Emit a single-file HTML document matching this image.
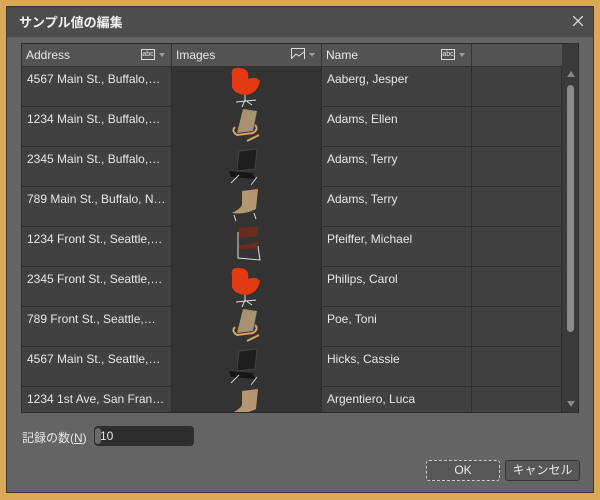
<!DOCTYPE html>
<html><head><meta charset="utf-8"><style>
*{margin:0;padding:0;box-sizing:border-box}
body{width:600px;height:500px;background:#d9a955;position:relative;overflow:hidden;font-family:"Liberation Sans","Noto Sans CJK JP",sans-serif;font-size:12px;color:#e8e8e8}
#win{position:absolute;left:6px;top:6px;width:588px;height:487px;background:#646464;border:1px solid #3a3a3a}
#title{position:absolute;left:0;top:0;width:586px;height:30px;background:#4d4d4d;font-size:13px;font-weight:bold;color:#f0f0f0;padding:5px 0 0 12px}
#close{position:absolute;right:10px;top:9px}
#grid{position:absolute;left:14px;top:36px;width:558px;height:370px;background:#414141;border:1px solid #2c2c2c;overflow:hidden}
.hd{position:absolute;top:0;height:23px;background:#535353;border-right:1px solid #333;border-bottom:1px solid #333;padding:4px 4px;font-size:12px}
.ic{position:absolute;right:16px;top:5px;width:14px;height:11px;border:1px solid #ddd;font-size:7px;line-height:9px;text-align:center}
.ar{position:absolute;right:6px;top:9px;width:0;height:0;border-left:3px solid transparent;border-right:3px solid transparent;border-top:4px solid #999}
.row{position:absolute;left:0;width:540px;height:40px;border-bottom:1px solid #2e2e2e}
.c{position:absolute;top:0;height:40px;border-right:1px solid #2e2e2e;padding:5px 5px;white-space:nowrap;overflow:hidden}
#imgcol{position:absolute;left:150px;top:23px;width:150px;height:350px;background:#333;border-right:1px solid #2e2e2e}
#sb{position:absolute;left:540px;top:0;width:17px;height:370px;background:#3a3a3a}
#thumb{position:absolute;left:5px;top:41px;width:7px;height:247px;background:#8a8a8a;border-radius:4px}
.btn{position:absolute;top:459px;height:21px;background:#575757;border:1px solid #333;border-radius:3px;text-align:center;line-height:18px;font-size:12px}
</style></head><body>
<div id="win">
<div id="title">サンプル値の編集<svg id="close" width="10" height="10"><path d="M0 0L10 10M10 0L0 10" stroke="#ddd" stroke-width="1.3"/></svg></div>
<div id="grid">
 <div class="hd" style="left:0;width:150px">Address<div class="ic">abc</div><div class="ar"></div></div>
 <div class="hd" style="left:150px;width:150px">Images<svg class="ic" style="border:none;top:4px" width="14" height="12"><rect x="0.5" y="0.5" width="13" height="11" fill="none" stroke="#ddd"/><path d="M1 10L5 6L8 8L13 4" fill="none" stroke="#ddd"/></svg><div class="ar"></div></div>
 <div class="hd" style="left:300px;width:150px">Name<div class="ic">abc</div><div class="ar"></div></div>
 <div class="hd" style="left:450px;width:90px;border-right:none"></div>
 <div id="rows"></div>
 <div id="imgcol">
  <svg width="150" height="350" viewBox="0 0 150 350">
   <defs>
    <g id="red"><path d="M4 8 Q2 0 12 1 Q22 2 20 12 Q28 9 32 14 Q30 26 18 28 Q6 27 4 20 Z" fill="#e23a12"/><path d="M17 28 L17 33 M8 35 L28 33 M17 33 L14 40 M17 33 L24 38" stroke="#ddd" stroke-width="1"/></g>
    <g id="wood"><path d="M14 2 L28 4 L24 24 L8 26 Z" fill="#a89072"/><path d="M6 20 Q2 24 8 28 L24 26 Q30 22 26 18" fill="none" stroke="#d8a264" stroke-width="2"/><path d="M18 34 L30 28" stroke="#d8a264" stroke-width="2"/></g>
    <g id="black"><path d="M12 4 L30 2 L28 22 L10 24 Z" fill="#1e1e1e" stroke="#444"/><path d="M2 24 L26 26 L28 32 L4 30 Z" fill="#161616"/><path d="M4 36 L12 28 M24 38 L30 30" stroke="#ccc"/></g>
    <g id="tan"><path d="M14 6 L30 4 L28 24 Q16 30 4 28 Q12 24 14 20 Z" fill="#b49672"/><path d="M6 30 L8 36 M26 28 L28 34" stroke="#ddd"/></g>
    <g id="cant"><path d="M8 4 L28 2 L28 12 L10 14 Z" fill="#6a2a1c"/><path d="M8 22 L28 18 L26 24 L10 26 Z" fill="#6a2a1c"/><path d="M8 8 L8 34 L30 36 L28 22" fill="none" stroke="#ddd"/></g>
   </defs>
   <use href="#red" x="56" y="0"/>
   <use href="#wood" x="57" y="40"/>
   <use href="#black" x="55" y="80"/>
   <use href="#tan" x="56" y="118"/>
   <use href="#cant" x="58" y="157"/>
   <use href="#red" x="56" y="200"/>
   <use href="#wood" x="57" y="240"/>
   <use href="#black" x="55" y="280"/>
   <use href="#tan" x="56" y="318"/>
  </svg>
 </div>
 <div id="sb"><div style="position:absolute;left:5px;top:27px;border-left:4px solid transparent;border-right:4px solid transparent;border-bottom:6px solid #888"></div><div id="thumb"></div><div style="position:absolute;left:5px;top:357px;border-left:4px solid transparent;border-right:4px solid transparent;border-top:6px solid #888"></div></div>
</div>
<div style="position:absolute;left:15px;top:422px;font-size:12px">記録の数(<u>N</u>)</div>
<div style="position:absolute;left:87px;top:419px;width:100px;height:20px;background:#2e2e2e;border-radius:4px;padding:3px 0 0 6px"><div style="position:absolute;left:1px;top:2px;width:6px;height:16px;background:#6a6a6a;border-radius:3px"></div>10</div>
<div class="btn" style="left:419px;width:74px;border:1px dashed #ccc;top:453px">OK</div>
<div class="btn" style="left:498px;width:75px;top:453px">キャンセル</div>
</div>
<script>
var a=["4567 Main St., Buffalo,…","1234 Main St., Buffalo,…","2345 Main St., Buffalo,…","789 Main St., Buffalo, N…","1234 Front St., Seattle,…","2345 Front St., Seattle,…","789 Front St., Seattle,…","4567 Main St., Seattle,…","1234 1st Ave, San Fran…"];
var n=["Aaberg, Jesper","Adams, Ellen","Adams, Terry","Adams, Terry","Pfeiffer, Michael","Philips, Carol","Poe, Toni","Hicks, Cassie","Argentiero, Luca"];
var h="";for(var i=0;i<9;i++){h+='<div class="row" style="top:'+(23+i*40)+'px"><div class="c" style="left:0;width:150px">'+a[i]+'</div><div class="c" style="left:300px;width:150px">'+n[i]+'</div><div class="c" style="left:450px;width:90px"></div></div>';}
document.getElementById("rows").innerHTML=h;
</script>
</body></html>
